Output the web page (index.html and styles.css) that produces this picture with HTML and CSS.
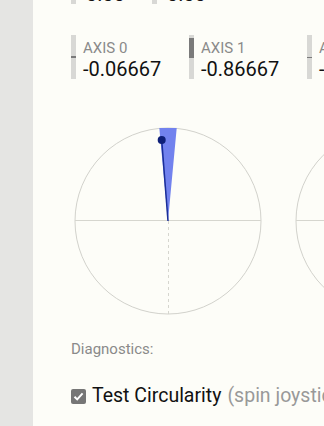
FILE: index.html
```html
<html>
	<head>
		<meta charset="utf-8">
		<title>Gamepad Tester</title>
		<link rel="stylesheet" href="styles.css">
	</head>
	<body>
		<div class="sidebar"></div>
		<div class="main">
			<div class="row buttons">
				<div class="item button"><div class="meter"><div class="spacer"></div><div class="half"></div></div><div class="readout"><div class="label">B0</div><div class="value">0.00</div></div></div>
				<div class="item button"><div class="meter"><div class="spacer"></div><div class="half"></div></div><div class="readout"><div class="label">B1</div><div class="value">0.00</div></div></div>
			</div>

			<div class="row axes">
				<div class="item axis">
					<div class="meter"><div class="spacer"></div><div class="fill" style="height: 2px"></div><div class="half"></div></div>
					<div class="readout"><div class="label">AXIS 0</div><div class="value">-0.06667</div></div>
				</div>
				<div class="item axis">
					<div class="meter"><div class="spacer"></div><div class="fill" style="height: 20px"></div><div class="half"></div></div>
					<div class="readout"><div class="label">AXIS 1</div><div class="value">-0.86667</div></div>
				</div>
				<div class="item axis">
					<div class="meter"><div class="spacer"></div><div class="fill" style="height: 1px"></div><div class="half"></div></div>
					<div class="readout"><div class="label">AXIS 2</div><div class="value">-0.00392</div></div>
				</div>
			</div>

			<div class="row sticks">
				<svg class="stick" width="190" height="190" viewBox="0 0 190 190">
					<circle cx="95" cy="95" r="93" class="ring"/>
					<line x1="2" y1="94.5" x2="188" y2="94.5" class="cross"/>
					<line x1="95.5" y1="95" x2="95.5" y2="188" class="cross dashed"/>
					<polygon points="95,95 86.3,2 103.7,2" class="wedge"/>
					<line x1="95" y1="95" x2="88.7" y2="14" class="needle"/>
					<circle cx="88.7" cy="14" r="4" class="dot"/>
				</svg>
				<svg class="stick" width="190" height="190" viewBox="0 0 190 190">
					<circle cx="95" cy="95" r="93" class="ring"/>
					<line x1="2" y1="94.5" x2="188" y2="94.5" class="cross"/>
					<line x1="95.5" y1="95" x2="95.5" y2="188" class="cross dashed"/>
					<circle cx="95" cy="95" r="4" class="dot"/>
				</svg>
			</div>

			<div class="section-title">Diagnostics:</div>

			<label class="check">
				<span class="box"><svg width="15" height="15" viewBox="0 0 15 15"><path d="M3.5 7.8 L6.2 10.4 L11.6 4.4" /></svg></span>
				<span class="check-text">Test Circularity</span>
				<span class="hint">(spin joystick in a circle)</span>
			</label>
		</div>
	</body>
</html>
```

FILE: styles.css
```css
body {
	margin: 0;
	display: flex;
	height: 426px;
	overflow: hidden;
	background: #fdfdf8;
	font-family: Roboto, "Noto Sans", sans-serif;
	color: #111;
}

.sidebar {
	flex: 0 0 33px;
	background: #e5e5e3;
}

.main {
	flex: 1 1 auto;
	padding-left: 38px;
	display: flex;
	flex-direction: column;
	align-items: flex-start;
	white-space: nowrap;
}

.row {
	display: flex;
	flex-shrink: 0;
}

.buttons {
	margin-top: -40px;
}

.axes {
	margin-top: 29px;
}

.item {
	display: flex;
	align-items: flex-start;
	flex-shrink: 0;
}

.button {
	width: 81px;
}

.axis {
	width: 118px;
}

.meter {
	width: 5px;
	height: 44px;
	display: flex;
	flex-direction: column;
	background: #d8d8d5;
}

.meter .spacer {
	flex: 1 1 auto;
}

.meter .half {
	flex: 0 0 21px;
}

.meter .fill {
	background: #7a7a7a;
}

.readout {
	margin-left: 7px;
	padding-top: 4px;
}

.button .readout {
	margin-left: 10px;
}

.label {
	font-size: 15px;
	line-height: 18px;
	color: #8a8a8a;
}

.value {
	font-size: 20px;
	line-height: 24px;
}

.sticks {
	margin-top: 45px;
	margin-left: 2px;
	gap: 31px;
}

.stick {
	flex-shrink: 0;
	display: block;
}

.ring {
	fill: none;
	stroke: #d2d2cc;
	stroke-width: 1;
}

.cross {
	stroke: #d6d6cf;
	stroke-width: 1;
}

.cross.dashed {
	stroke-dasharray: 3 3;
}

.wedge {
	fill: #7282ee;
}

.needle {
	stroke: #1a2e98;
	stroke-width: 1.5;
}

.dot {
	fill: #0e1f78;
}

.section-title {
	margin-top: 24px;
	font-size: 15px;
	line-height: 18px;
	color: #8a8a8a;
}

.check {
	margin-top: 26px;
	display: flex;
	align-items: center;
	font-size: 19.5px;
	line-height: 24px;
}

.box {
	width: 15px;
	height: 15px;
	border-radius: 2px;
	background: #767676;
	margin-right: 6px;
	display: flex;
}

.box path {
	fill: none;
	stroke: #fff;
	stroke-width: 2;
}

.hint {
	margin-left: 6px;
	color: #999;
}
```
